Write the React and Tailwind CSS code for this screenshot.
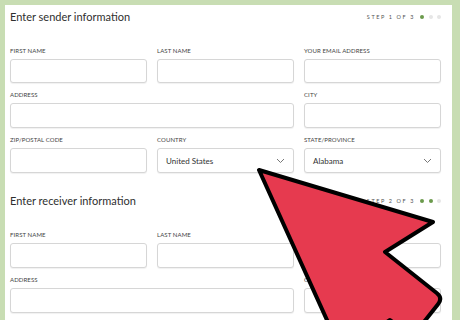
import React from 'react';

const Chevron = () => (
    <svg width="9" height="6" viewBox="0 0 9 6" className="shrink-0">
        <polyline points="1,1 4.5,4.5 8,1" fill="none" stroke="#777" strokeWidth="1" />
    </svg>
);

const Field = ({ label, value, select, span, h = 'h-[25px]' }) => (
    <div className={span ? 'col-span-2' : ''}>
        <div className="h-[8px] leading-[8px] text-[6px] tracking-[0.1px] text-[#444] uppercase">{label}</div>
        <div
            className={`mt-[4px] ${h} rounded-[3px] border border-[#d6d6d6] bg-white shadow-[0_1px_1px_rgba(0,0,0,0.06)] flex items-center justify-between pl-[8px] pr-[8px]`}
        >
            <span className="text-[8px] text-[#333]">{value}</span>
            {select && <Chevron />}
        </div>
    </div>
);

const Step = ({ n }) => (
    <div className="flex items-center">
        <span className="text-[5.5px] tracking-[1.6px] text-[#555]">STEP {n} OF 3</span>
        <div className="ml-[5px] flex gap-[4.5px]">
            {[1, 2, 3].map((i) => (
                <span
                    key={i}
                    className={`w-[4px] h-[4px] rounded-full ${i <= n ? 'bg-[#6b9a4c]' : 'bg-[#e6e6e6]'}`}
                />
            ))}
        </div>
    </div>
);

const Header = ({ title, n }) => (
    <div className="h-[16px] flex items-center justify-between">
        <h2 className="text-[11px] text-[#2f2f2f] leading-[16px]">{title}</h2>
        <Step n={n} />
    </div>
);

export default function App() {
    return (
        <div className="relative w-[460px] h-[320px] overflow-hidden bg-[#c8ddb3] pt-[5px] pl-[5px] pr-[8px] font-['Lato','Liberation_Sans',sans-serif]">
            <div className="h-[330px] bg-white pl-[5px] pr-[11px] pt-[4px]">
                <Header title="Enter sender information" n={1} />
                <div className="mt-[22px] grid grid-cols-3 gap-x-[10px] gap-y-[8px]">
                    <Field label="First name" h="h-[24px]" />
                    <Field label="Last name" h="h-[24px]" />
                    <Field label="Your email address" h="h-[24px]" />
                    <Field label="Address" span />
                    <Field label="City" />
                    <Field label="Zip/postal code" />
                    <Field label="Country" value="United States" select />
                    <Field label="State/province" value="Alabama" select />
                </div>

                <div className="mt-[20px]">
                    <Header title="Enter receiver information" n={2} />
                </div>
                <div className="mt-[22px] grid grid-cols-3 gap-x-[10px] gap-y-[8px]">
                    <Field label="First name" />
                    <Field label="Last name" />
                    <Field label="Your email address" />
                    <Field label="Address" span />
                    <Field label="City" />
                </div>
            </div>

            <svg className="absolute inset-0" width="460" height="320" viewBox="0 0 460 320">
                <path
                    d="M259 170 L433 222 L385 252 L436.7 293 Q443 298 438 304.3 L417 330.7 Q412 337 405.7 332 L390 320 L341 351 Z"
                    fill="#e63a4f"
                    stroke="#000"
                    strokeWidth="4"
                    strokeLinejoin="round"
                />
            </svg>
        </div>
    );
}
